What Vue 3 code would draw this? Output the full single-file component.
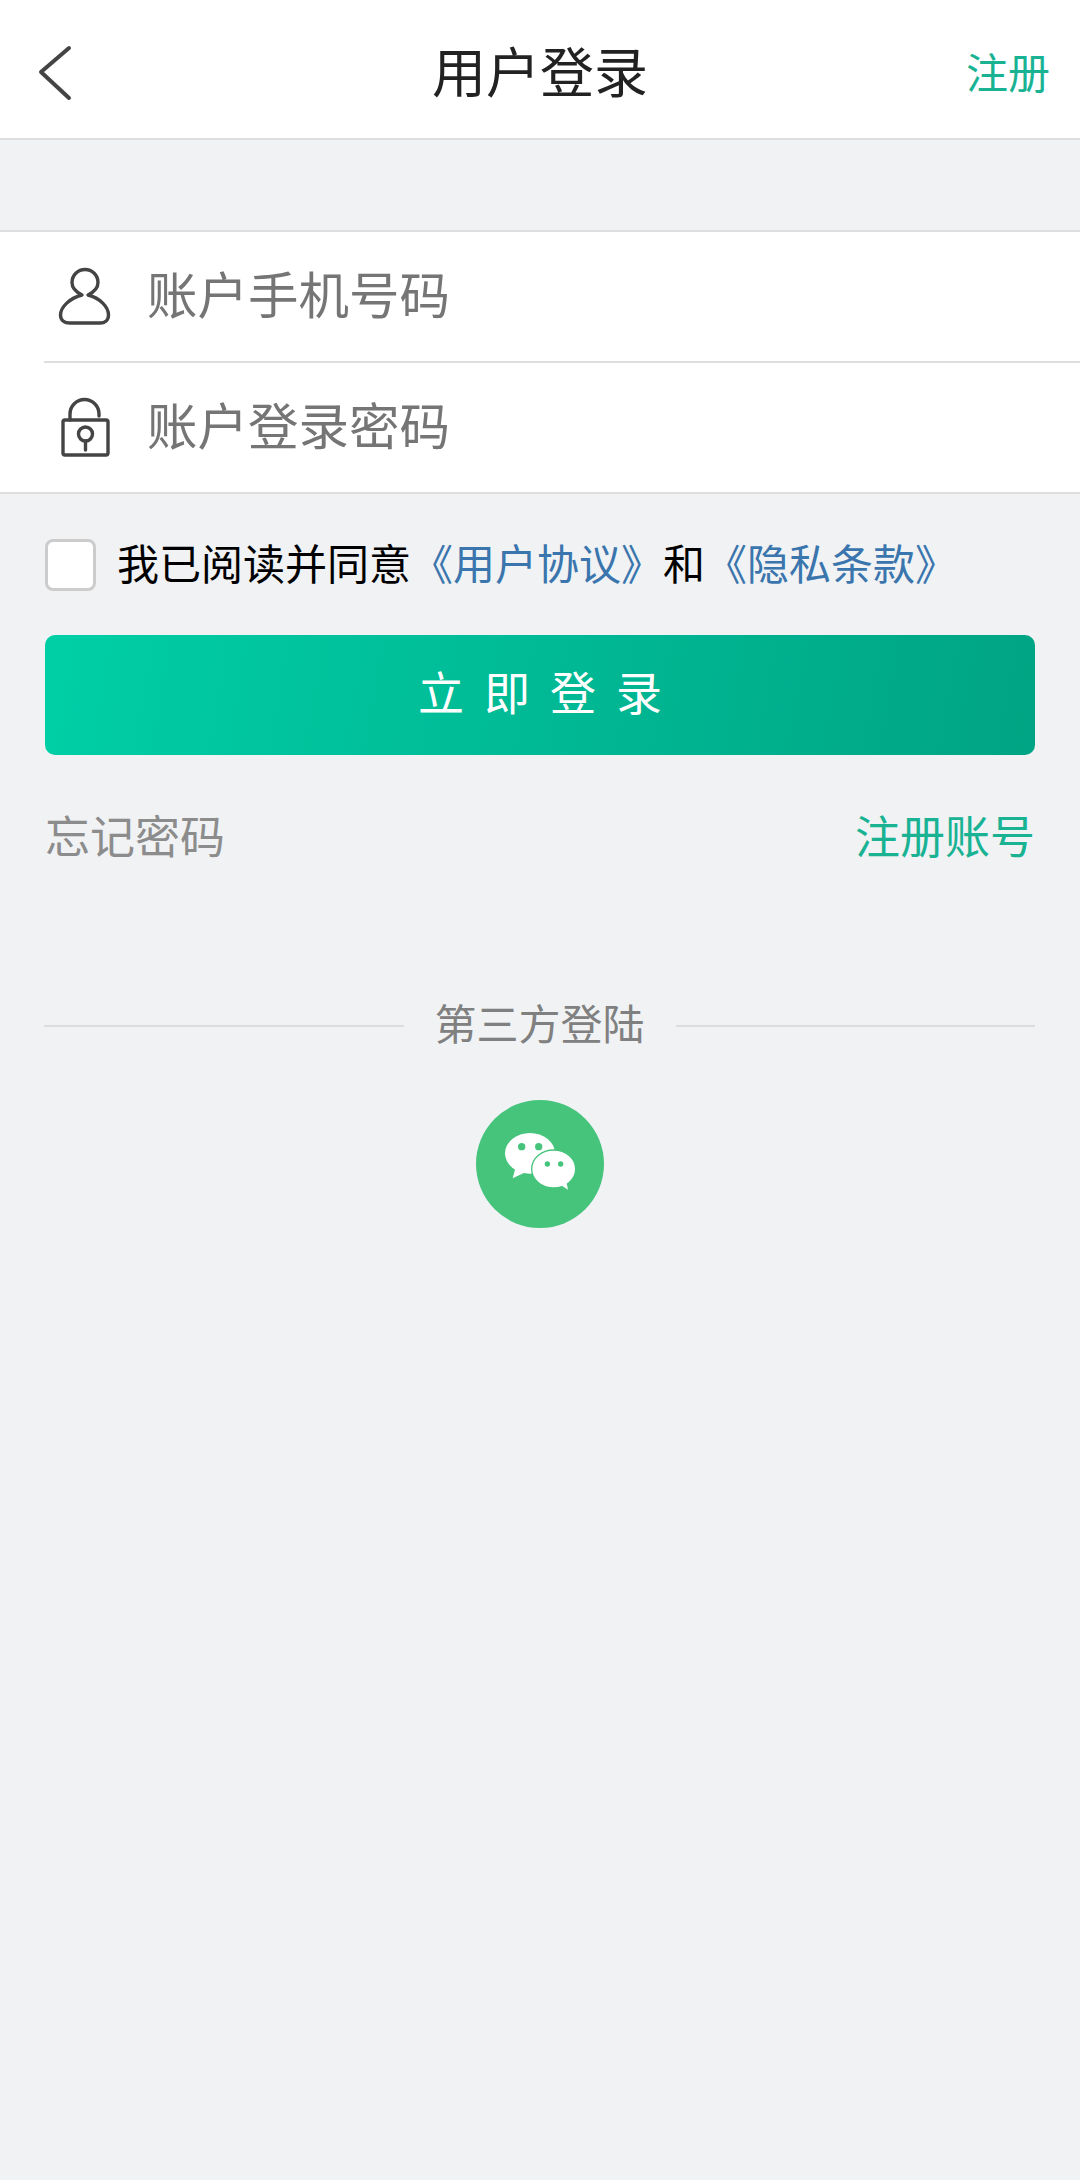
<template>
  <div class="page">
    <header class="nav">
      <svg class="back" viewBox="0 0 40 60" fill="none" stroke="#444" stroke-width="4" stroke-linecap="round" stroke-linejoin="round">
        <path d="M32 6 L4 30 L32 56"></path>
      </svg>
      <h1 class="nav-title">用户登录</h1>
      <a class="nav-link">注册</a>
    </header>

    <section class="form">
      <div class="field">
        <svg class="field-icon" viewBox="55 264 60 64" fill="none" stroke="#444" stroke-width="3.4" stroke-linejoin="round">
          <path d="M82 294 C76 291 72 287 72 281.5 A13 13 0 0 1 98 281.5 C98 287 94 291 88 294 C100 297 108.5 306 108.5 314 C108.5 319 105 322 100 322 L70 322 C64 322 60.5 319 60.5 314 C60.5 306 70 297 82 294 Z"></path>
        </svg>
        <span class="placeholder">账户手机号码</span>
      </div>
      <div class="field">
        <svg class="field-icon" viewBox="55 396 60 64" fill="none" stroke="#444" stroke-width="3.4" stroke-linejoin="round" stroke-linecap="round">
          <rect x="63" y="420" width="45" height="35" rx="2"></rect>
          <path d="M70 420 V414 A14.5 14.5 0 0 1 99 414 V416"></path>
          <circle cx="85.5" cy="434" r="7"></circle>
          <path d="M85.5 441 V450"></path>
        </svg>
        <span class="placeholder">账户登录密码</span>
      </div>
    </section>

    <div class="agree">
      <span class="checkbox"></span>
      <p class="agree-text">我已阅读并同意<a>《用户协议》</a>和<a>《隐私条款》</a></p>
    </div>

    <button class="submit">立即登录</button>

    <div class="links">
      <a class="forgot">忘记密码</a>
      <a class="signup">注册账号</a>
    </div>

    <div class="divider">
      <span class="line"></span>
      <span class="divider-text">第三方登陆</span>
      <span class="line"></span>
    </div>

    <svg class="wechat" viewBox="108 60 384 384">
      <circle cx="300" cy="252" r="192" fill="#46c47c"></circle>
      <g fill="#fff">
        <ellipse cx="270" cy="220" rx="75" ry="61"></ellipse>
        <path d="M226 265 L218 295 L258 276 Z"></path>
      </g>
      <circle cx="245" cy="200" r="11" fill="#46c47c"></circle>
      <circle cx="296" cy="200" r="11" fill="#46c47c"></circle>
      <ellipse cx="341" cy="267" rx="66" ry="57" fill="#fff" stroke="#46c47c" stroke-width="4"></ellipse>
      <path d="M358 312 L384 329 L378 300 Z" fill="#fff"></path>
      <circle cx="322" cy="252" r="8" fill="#46c47c"></circle>
      <circle cx="362" cy="252" r="8" fill="#46c47c"></circle>
    </svg>
  </div>
</template>

<script setup>
</script>

<style>
html,
body {
  margin: 0;
  background: #f0f2f4;
}
</style>

<style scoped>
.page {
  width: 1080px;
  min-height: 2180px;
  background: #f0f2f4;
  font-family: "Noto Sans CJK SC", "Noto Sans", sans-serif;
  display: flex;
  flex-direction: column;
}

.nav {
  height: 138px;
  background: #fff;
  border-bottom: 2px solid #dedede;
  display: flex;
  align-items: center;
  justify-content: space-between;
  padding: 0 30px 0 37px;
  position: relative;
}

.back {
  width: 40px;
  height: 60px;
  margin-top: 6px;
}

.nav-title {
  position: absolute;
  left: 0;
  right: 0;
  top: 35px;
  margin: 0;
  text-align: center;
  font-size: 54px;
  font-weight: 400;
  line-height: 70px;
  color: #222;
}

.nav-link {
  font-size: 42px;
  line-height: 60px;
  color: #19b394;
  margin-top: 4px;
}

.form {
  margin-top: 90px;
  background: #fff;
  border-top: 2px solid #dedede;
  border-bottom: 2px solid #dedede;
}

.field {
  height: 129px;
  margin-left: 44px;
  display: flex;
  align-items: center;
  gap: 32px;
  padding-left: 11px;
}

.field + .field {
  border-top: 2px solid #dedede;
}

.field-icon {
  width: 60px;
  height: 64px;
}

.placeholder {
  font-size: 50.5px;
  line-height: 70px;
  color: #757575;
  margin-top: -10px;
}

.agree {
  margin: 45px 0 0 45px;
  height: 52px;
  display: flex;
  align-items: center;
  gap: 21px;
}

.checkbox {
  box-sizing: border-box;
  width: 51px;
  height: 52px;
  background: #fff;
  border: 3px solid #ccc;
  border-radius: 8px;
}

.agree-text {
  margin: -6px 0 0;
  font-size: 42px;
  line-height: 52px;
  color: #000;
}

.agree-text a {
  color: #3a75ad;
}

.submit {
  display: block;
  width: 990px;
  height: 120px;
  margin: 44px 0 0 45px;
  border: 0;
  border-radius: 10px;
  background: linear-gradient(100deg, #00cfa6 0%, #00a484 100%);
  color: #fff;
  font-family: inherit;
  font-size: 46px;
  letter-spacing: 20px;
  padding: 0 0 10px 20px;
  line-height: 60px;
}

.links {
  margin: 48px 45px 0;
  display: flex;
  justify-content: space-between;
  font-size: 45px;
  line-height: 64px;
}

.forgot {
  color: #8c8c8c;
}

.signup {
  color: #19b394;
}

.divider {
  margin: 125px 45px 0 44px;
  display: flex;
  align-items: center;
  gap: 31px;
}

.line {
  flex: 1;
  height: 2px;
  background: #dcdcdc;
}

.divider-text {
  font-size: 42px;
  line-height: 60px;
  color: #808080;
  margin-bottom: 8px;
}

.wechat {
  width: 128px;
  height: 128px;
  margin: 40px auto 0;
  display: block;
}
</style>
